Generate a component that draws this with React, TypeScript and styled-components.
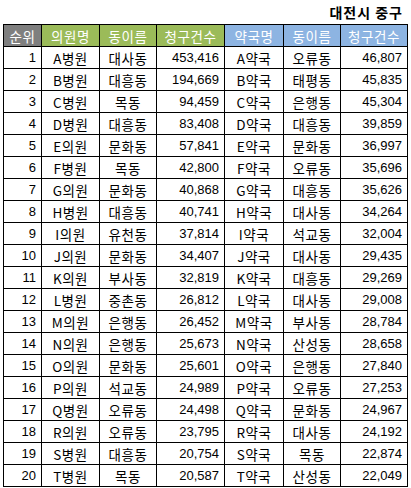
import React from "react";
import styled, { createGlobalStyle } from "styled-components";

const Global = createGlobalStyle`
  html, body { margin: 0; padding: 0; background: #ffffff; }
  body { font-family: "Liberation Sans", "Noto Sans CJK KR", sans-serif; }
`;

const Page = styled.div`
  width: 411px;
  height: 488px;
  padding-left: 3px;
  box-sizing: border-box;
  display: flex;
  flex-direction: column;
`;

const Title = styled.div`
  height: 24px;
  display: flex;
  align-items: center;
  justify-content: flex-end;
  padding-right: 8px;
  font-size: 14px;
  letter-spacing: 1px;
  font-weight: bold;
  color: #000;
  font-family: "Noto Sans CJK KR", sans-serif;
`;

const Grid = styled.div`
  display: grid;
  grid-template-columns: 37px 57px 56px 67px 58px 56px 66px;
  grid-auto-rows: 21px;
  gap: 1px;
  padding: 1px;
  background: #000;
  width: max-content;
`;

type Tone = "gray" | "green" | "blue";
const tones: Record<Tone, string> = {
  gray: "#7f7f7f",
  green: "#9bbb59",
  blue: "#8db4e2",
};

const Head = styled.div<{ $tone: Tone }>`
  background: ${(p) => tones[p.$tone]};
  color: #fff;
  font-size: 13.5px;
  letter-spacing: 0.6px;
  font-family: "Noto Sans CJK KR", sans-serif;
  display: flex;
  align-items: center;
  justify-content: center;
`;

const Cell = styled.div<{ $align: "center" | "right" }>`
  background: #fff;
  color: #000;
  font-size: 13.5px;
  letter-spacing: 0.5px;
  display: flex;
  align-items: center;
  justify-content: ${(p) => (p.$align === "right" ? "flex-end" : "center")};
  padding-right: ${(p) => (p.$align === "right" ? "5px" : "0")};
  font-family: "Noto Sans CJK KR", sans-serif;
  white-space: nowrap;
`;

const Num = styled.span`
  font-family: "Liberation Sans", sans-serif;
  font-size: 13px;
  letter-spacing: 0;
`;

const rows: [string, string, string, string, string, string][] = [
  ["A병원", "대사동", "453,416", "A약국", "오류동", "46,807"],
  ["B병원", "대흥동", "194,669", "B약국", "태평동", "45,835"],
  ["C병원", "목동", "94,459", "C약국", "은행동", "45,304"],
  ["D병원", "대흥동", "83,408", "D약국", "대흥동", "39,859"],
  ["E의원", "문화동", "57,841", "E약국", "문화동", "36,997"],
  ["F병원", "목동", "42,800", "F약국", "오류동", "35,696"],
  ["G의원", "문화동", "40,868", "G약국", "대흥동", "35,626"],
  ["H병원", "대흥동", "40,741", "H약국", "대사동", "34,264"],
  ["I의원", "유천동", "37,814", "I약국", "석교동", "32,004"],
  ["J의원", "문화동", "34,407", "J약국", "대사동", "29,435"],
  ["K의원", "부사동", "32,819", "K약국", "대흥동", "29,269"],
  ["L병원", "중촌동", "26,812", "L약국", "대사동", "29,008"],
  ["M의원", "은행동", "26,452", "M약국", "부사동", "28,784"],
  ["N의원", "은행동", "25,673", "N약국", "산성동", "28,658"],
  ["O의원", "문화동", "25,601", "O약국", "은행동", "27,840"],
  ["P의원", "석교동", "24,989", "P약국", "오류동", "27,253"],
  ["Q병원", "오류동", "24,498", "Q약국", "문화동", "24,967"],
  ["R의원", "오류동", "23,795", "R약국", "대사동", "24,192"],
  ["S병원", "대흥동", "20,754", "S약국", "목동", "22,874"],
  ["T병원", "목동", "20,587", "T약국", "산성동", "22,049"],
];

export default function App() {
  return (
    <>
      <Global />
      <Page>
        <Title>대전시 중구</Title>
        <Grid>
          <Head $tone="gray">순위</Head>
          <Head $tone="green">의원명</Head>
          <Head $tone="green">동이름</Head>
          <Head $tone="green">청구건수</Head>
          <Head $tone="blue">약국명</Head>
          <Head $tone="blue">동이름</Head>
          <Head $tone="blue">청구건수</Head>
          {rows.map((r, i) => (
            <React.Fragment key={i}>
              <Cell $align="right"><Num>{i + 1}</Num></Cell>
              <Cell $align="center">{r[0]}</Cell>
              <Cell $align="center">{r[1]}</Cell>
              <Cell $align="right"><Num>{r[2]}</Num></Cell>
              <Cell $align="center">{r[3]}</Cell>
              <Cell $align="center">{r[4]}</Cell>
              <Cell $align="right"><Num>{r[5]}</Num></Cell>
            </React.Fragment>
          ))}
        </Grid>
      </Page>
    </>
  );
}
